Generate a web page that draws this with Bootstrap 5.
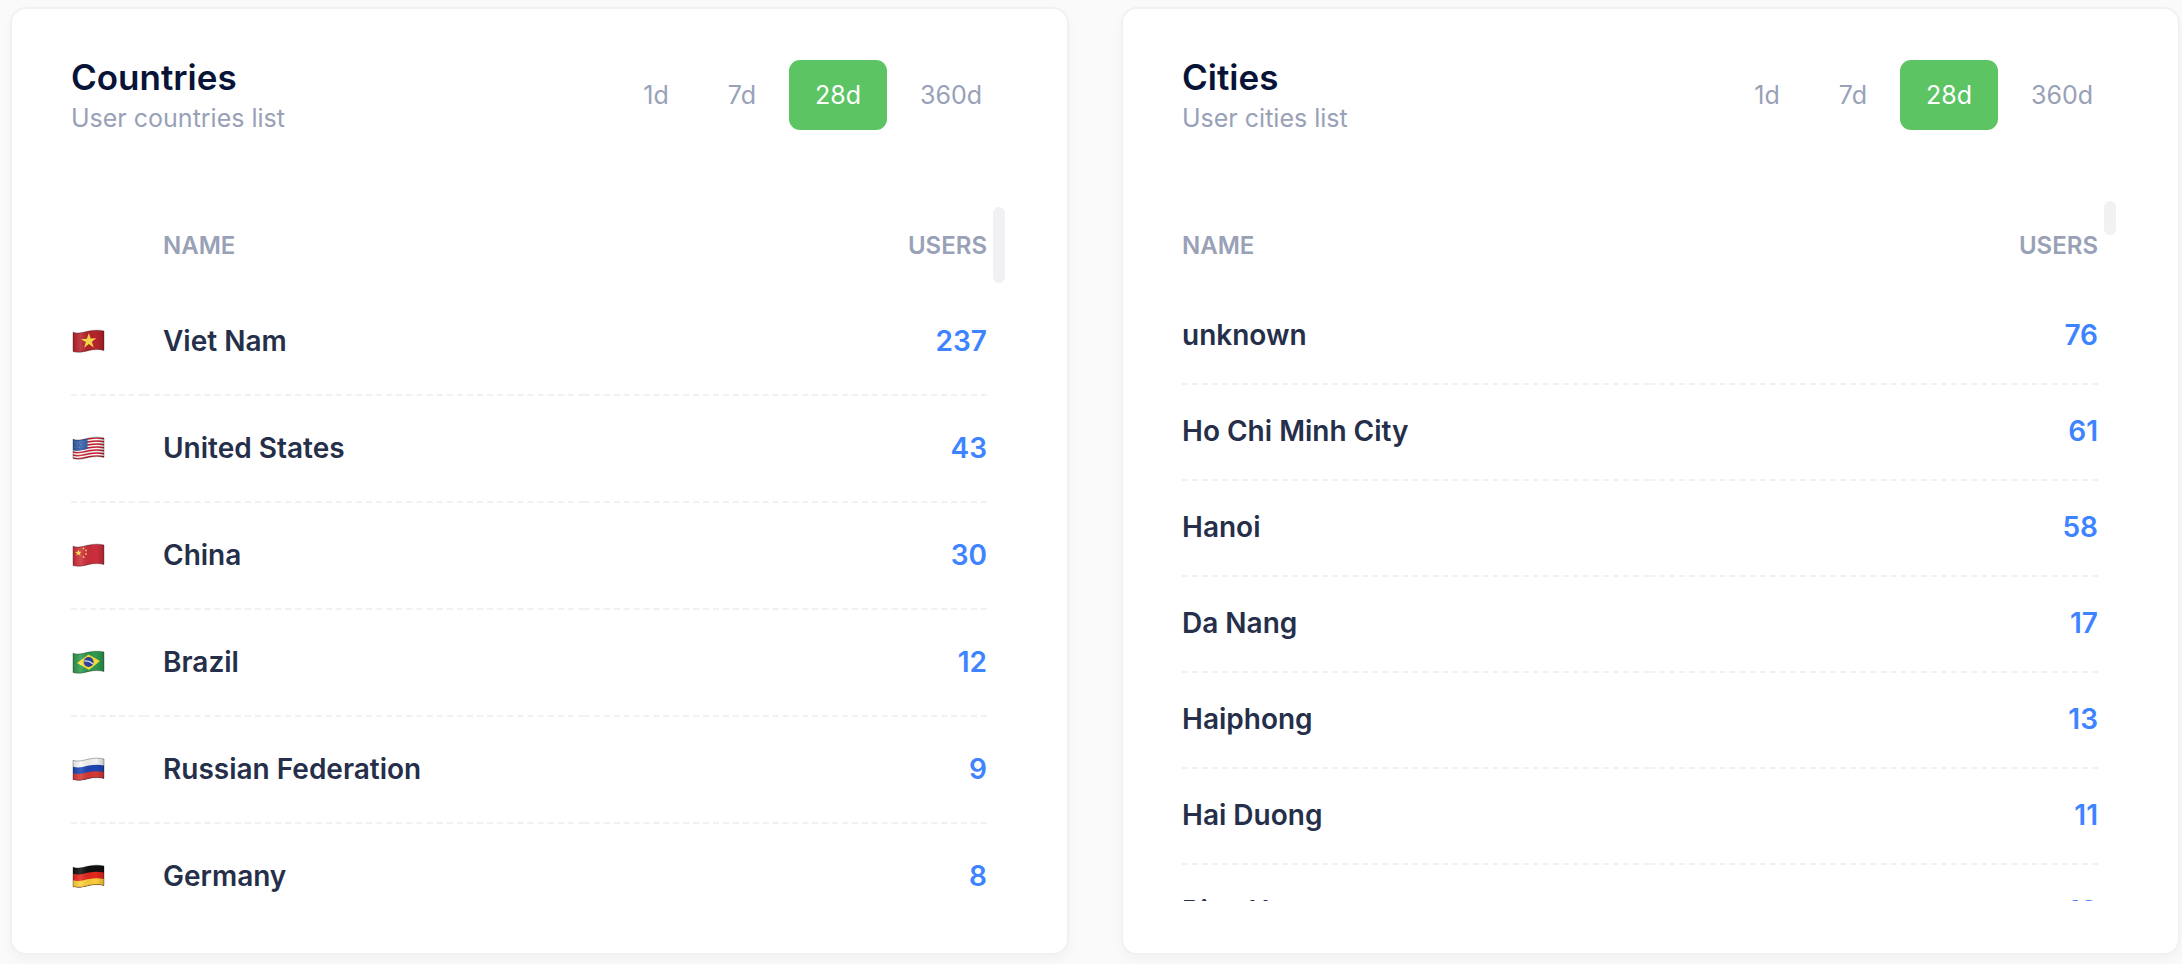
<!DOCTYPE html>
<html lang="en">
<head>
<meta charset="utf-8">
<meta name="viewport" content="width=device-width, initial-scale=1">
<title>Users by location</title>
<link href="https://cdn.jsdelivr.net/npm/bootstrap@5.3.0/dist/css/bootstrap.min.css" rel="stylesheet">
<style>
  body { background: #fafafa; font-family: Inter, "Noto Sans", sans-serif; font-size: 28px; color: #252f4a; }
  .page { display: grid; grid-template-columns: repeat(auto-fit, minmax(620px, 1fr)); gap: 52px; padding: 7px 2px 9px 10px; }
  .panel { --bs-card-border-width: 2px; --bs-card-border-color: #f1f1f2; --bs-card-border-radius: 16px; --bs-card-inner-border-radius: 14px; --bs-card-bg: #fff; box-shadow: 0 6px 12px rgba(0, 0, 0, .03); }
  .panel-head { padding: 46px 59px 0; }
  .panel-title { font-size: 35px; line-height: 44px; font-weight: 600; color: #071437; margin: 0; }
  .panel-sub { font-size: 25px; line-height: 38px; font-weight: 400; color: #99a1b7; margin: 0; }
  .range-tabs { gap: 7px; margin-top: 5px; }
  .range-tabs .btn { --bs-btn-padding-x: 26px; --bs-btn-padding-y: 16px; --bs-btn-font-size: 25px; --bs-btn-line-height: 38px; --bs-btn-font-weight: 400; --bs-btn-border-width: 0; --bs-btn-border-radius: 11px; --bs-btn-color: #99a1b7; --bs-btn-hover-color: #5cc463; --bs-btn-active-bg: #5cc463; --bs-btn-active-color: #fff; }
  .panel-body { padding: 64px 59px 52px; }
  .list-scroll { height: 700px; overflow-y: auto; scrollbar-width: none; padding-right: 21px; }
  .list-scroll::-webkit-scrollbar { display: none; }
  .thumb { top: 0; right: 3px; width: 12px; height: 34px; border-radius: 6px; background: #f1f1f4; }
  .thumb-long { top: 6px; height: 76px; }
  .geo-table { width: 100%; border-collapse: separate; border-spacing: 0; }
  .geo-table th { height: 88px; padding: 2px 0 0; font-size: 24px; font-weight: 600; color: #99a1b7; }
  .geo-table td { height: 96px; padding: 0 0 2px; font-weight: 600; border-bottom: 2px dashed #f1f1f2; }
  .with-flags td { height: 107px; }
  .with-flags .flag-col { width: 73px; }
  .geo-table .name-col { width: 51%; }
  .with-flags .name-col { width: 48%; padding-left: 19px; }
  .geo-table .count { text-align: right; }
  td.count { color: #3e83ff; }
  .flag { display: block; width: 35px; height: 24px; }
</style>
</head>
<body>
<svg width="0" height="0" class="position-absolute" aria-hidden="true">
  <defs>
    <clipPath id="wave"><path d="M2 3.2C8 5.2 13 3 18 2C23 1 28 .8 33 2V21.4C28 20.200 23 20.400 18 21.400C13 22.600 8 24.200 2 22.600Z"/></clipPath>
    <linearGradient id="sheen"><stop offset="0" stop-color="#000" stop-opacity=".12"/><stop offset=".25" stop-color="#fff" stop-opacity=".12"/><stop offset=".5" stop-color="#000" stop-opacity=".06"/><stop offset=".75" stop-color="#000" stop-opacity=".02"/><stop offset="1" stop-color="#000" stop-opacity=".2"/></linearGradient>
    <g id="shade"><path d="M2 3.200C8 5.200 13 3 18 2C23 1 28 .8 33 2V21.400C28 20.200 23 20.400 18 21.400C13 22.600 8 24.200 2 22.600Z" fill="url(#sheen)" stroke="#000" stroke-opacity=".3" stroke-width="1"/></g>
  </defs>
</svg>
<main class="page">
  <section class="card panel">
    <header class="panel-head d-flex justify-content-between align-items-start">
      <div><h2 class="panel-title">Countries</h2><p class="panel-sub">User countries list</p></div>
      <div class="range-tabs d-flex" role="group" aria-label="Countries period">
        <button type="button" class="btn">1d</button><button type="button" class="btn">7d</button><button type="button" class="btn active">28d</button><button type="button" class="btn">360d</button>
      </div>
    </header>
    <div class="panel-body">
      <div class="position-relative">
        <div class="list-scroll">
          <table class="geo-table with-flags">
            <thead><tr><th class="flag-col"></th><th class="name-col">NAME</th><th class="count">USERS</th></tr></thead>
            <tbody>
              <tr><td><svg class="flag" viewBox="0 0 35 24"><g clip-path="url(#wave)"><path fill="#b9242c" d="M0 0h35v24H0z"/><path fill="#ffe14a" d="M17.800 4l1.900 5.500 5.600-.3-4.500 3.500 2 5.700-5-3.300-4.600 3.700 1.600-5.700-4.700-2.900 5.800-.4z"/></g><use href="#shade"/></svg></td><td class="name-col">Viet Nam</td><td class="count">237</td></tr>
              <tr><td><svg class="flag" viewBox="0 0 35 24"><g clip-path="url(#wave)"><path fill="#fff" d="M0 0h35v24H0z"/><g fill="none" stroke="#c8202e" stroke-width="1.600"><path d="M2 4C8 6 13 3.800 18 2.800S28 1.600 33 2.800"/><path d="M2 7C8 9 13 6.800 18 5.800S28 4.600 33 5.800"/><path d="M2 10C8 12 13 9.800 18 8.800S28 7.600 33 8.800"/><path d="M2 13C8 15 13 12.800 18 11.800S28 10.600 33 11.800"/><path d="M2 16C8 18 13 15.800 18 14.800S28 13.600 33 14.800"/><path d="M2 19C8 21 13 18.800 18 17.800S28 16.600 33 17.800"/><path d="M2 22C8 24 13 21.800 18 20.800S28 19.600 33 20.800"/></g><path fill="#2f5ba8" d="M2 3C8 5 12 3.200 16.500 2.200V12.800C12 14 8 15.600 2 14.200Z"/><g stroke="#fff" stroke-opacity=".35" stroke-width=".8" stroke-dasharray="1 1.500" fill="none"><path d="M3 6Q9 7.500 16 4.600"/><path d="M4 8.500Q9 10 16 7"/><path d="M3 11Q9 12.500 16 9.500"/></g></g><use href="#shade"/></svg></td><td class="name-col">United States</td><td class="count">43</td></tr>
              <tr><td><svg class="flag" viewBox="0 0 35 24"><g clip-path="url(#wave)"><path fill="#cf2f3d" d="M0 0h35v24H0z"/><path fill="#ffe14a" d="M7.500 6.500l.8 2.300 2.500-.1-2 1.600.8 2.500-2.200-1.500-2.200 1.500.8-2.400-2-1.500 2.600-.1z"/><g fill="#f8cf45"><circle cx="12.500" cy="5.500" r=".9"/><circle cx="15" cy="7.500" r=".9"/><circle cx="15" cy="11" r=".9"/><circle cx="12.500" cy="14" r=".9"/></g></g><use href="#shade"/></svg></td><td class="name-col">China</td><td class="count">30</td></tr>
              <tr><td><svg class="flag" viewBox="0 0 35 24"><g clip-path="url(#wave)"><path fill="#2f9b50" d="M0 0h35v24H0z"/><path fill="#ffdf3d" d="M6 13L17.500 4.500 29 11 18 20z"/><circle cx="17.600" cy="12" r="5" fill="#30439b"/><path d="M13 11Q18 10 22 14" fill="none" stroke="#dfe7f5" stroke-width="1.200"/></g><use href="#shade"/></svg></td><td class="name-col">Brazil</td><td class="count">12</td></tr>
              <tr><td><svg class="flag" viewBox="0 0 35 24"><g clip-path="url(#wave)"><path fill="#f7f7f7" d="M0 0h35v24H0z"/><path fill="#1f47b5" d="M2 9.700C8 11.600 13 9.500 18 8.500S28 7.300 33 8.500V24H2z"/><path fill="#d93a34" d="M2 16.300C8 18.200 13 16 18 15S28 13.800 33 15V24H2z"/></g><use href="#shade"/></svg></td><td class="name-col">Russian Federation</td><td class="count">9</td></tr>
              <tr><td><svg class="flag" viewBox="0 0 35 24"><g clip-path="url(#wave)"><path fill="#111" d="M0 0h35v24H0z"/><path fill="#e5281f" d="M2 9.700C8 11.600 13 9.500 18 8.500S28 7.300 33 8.500V24H2z"/><path fill="#ffd23c" d="M2 16.300C8 18.200 13 16 18 15S28 13.800 33 15V24H2z"/></g><use href="#shade"/></svg></td><td class="name-col">Germany</td><td class="count">8</td></tr>
            </tbody>
          </table>
        </div>
        <span class="thumb thumb-long position-absolute"></span>
      </div>
    </div>
  </section>
  <section class="card panel">
    <header class="panel-head d-flex justify-content-between align-items-start">
      <div><h2 class="panel-title">Cities</h2><p class="panel-sub">User cities list</p></div>
      <div class="range-tabs d-flex" role="group" aria-label="Cities period">
        <button type="button" class="btn">1d</button><button type="button" class="btn">7d</button><button type="button" class="btn active">28d</button><button type="button" class="btn">360d</button>
      </div>
    </header>
    <div class="panel-body">
      <div class="position-relative">
        <div class="list-scroll">
          <table class="geo-table">
            <thead><tr><th class="name-col">NAME</th><th class="count">USERS</th></tr></thead>
            <tbody>
              <tr><td>unknown</td><td class="count">76</td></tr>
              <tr><td>Ho Chi Minh City</td><td class="count">61</td></tr>
              <tr><td>Hanoi</td><td class="count">58</td></tr>
              <tr><td>Da Nang</td><td class="count">17</td></tr>
              <tr><td>Haiphong</td><td class="count">13</td></tr>
              <tr><td>Hai Duong</td><td class="count">11</td></tr>
              <tr><td>Bien Hoa</td><td class="count">10</td></tr>
            </tbody>
          </table>
        </div>
        <span class="thumb position-absolute"></span>
      </div>
    </div>
  </section>
</main>
<script src="https://cdn.jsdelivr.net/npm/bootstrap@5.3.0/dist/js/bootstrap.bundle.min.js"></script>
</body>
</html>
